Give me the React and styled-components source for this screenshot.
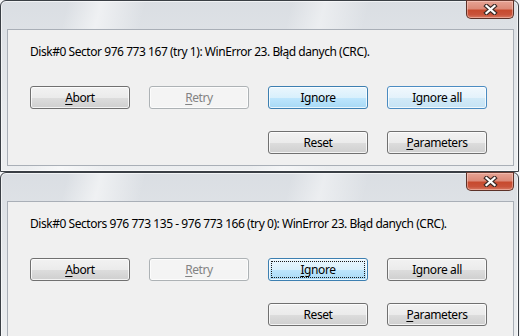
import React from 'react';
import styled, { createGlobalStyle, css } from 'styled-components';

const GlobalStyle = createGlobalStyle`
    html, body {
        margin: 0;
        padding: 0;
        background: #f3f4f6;
        overflow: hidden;
    }
    body {
        font-family: "Noto Sans", "Open Sans", sans-serif;
        font-size: 12px;
        color: #000;
    }
`;

const Page = styled.div`
    display: flex;
    flex-direction: column;
    width: 520px;
    height: 336px;
    overflow: hidden;
`;

const Window = styled.div`
    flex: none;
    box-sizing: border-box;
    width: 519px;
    height: 172px;
    padding: 0 4px 5px 6px;
    border: 1px solid #3a3f45;
    border-radius: 6px 6px 0 0;
    display: flex;
    flex-direction: column;
    background:
        linear-gradient(104deg,
            rgba(255, 255, 255, 0) 12%,
            rgba(255, 255, 255, 0.55) 18%,
            rgba(255, 255, 255, 0) 26%,
            rgba(255, 255, 255, 0) 52%,
            rgba(255, 255, 255, 0.45) 58%,
            rgba(255, 255, 255, 0) 66%),
        linear-gradient(180deg, #dadee3 0%, #e6e9ec 60%, #eceef0 100%);
    box-shadow: inset 0 0 0 1px rgba(255, 255, 255, 0.6);
`;

const TitleBar = styled.div`
    flex: none;
    height: 28px;
    display: flex;
    justify-content: flex-end;
    align-items: flex-start;
`;

const CloseButton = styled.div`
    box-sizing: border-box;
    width: 48px;
    height: 19px;
    margin-top: -1px;
    display: flex;
    align-items: center;
    justify-content: center;
    border: 1px solid #5c3128;
    border-top-color: #6a3a30;
    border-radius: 0 0 5px 5px;
    background: linear-gradient(180deg,
        #e6a394 0%, #dc8a78 45%, #c74a2e 55%, #c9533a 80%, #d77a62 100%);
    box-shadow: inset 0 0 0 1px rgba(255, 220, 210, 0.45);
`;

const Client = styled.div`
    flex: 1;
    box-sizing: border-box;
    border: 1px solid #a9afb7;
    background: #f0f0f0;
    padding: 14px 0 11px 22px;
    display: flex;
    flex-direction: column;
`;

const Message = styled.div`
    height: 16px;
    line-height: 16px;
    white-space: nowrap;
    letter-spacing: -0.45px;
`;

const ButtonGrid = styled.div`
    margin-top: 26px;
    display: grid;
    grid-template-columns: repeat(4, 100px);
    grid-auto-rows: 23px;
    column-gap: 19px;
    row-gap: 22px;
`;

const variants = {
    normal: css`
        border-color: #707070;
        background: linear-gradient(180deg, #f2f2f2 0%, #ebebeb 50%, #dddddd 51%, #cfcfcf 100%);
    `,
    disabled: css`
        border-color: #adb2b5;
        background: #f4f4f4;
        color: #838383;
    `,
    hot: css`
        border-color: #3c7fb1;
        background: linear-gradient(180deg, #eaf6fd 0%, #d9f0fc 50%, #bee6fd 51%, #a7d9f5 100%);
    `,
    default: css`
        border-color: #4b8cc2;
        background: linear-gradient(180deg, #f1f8fd 0%, #e4f2fb 50%, #d2eaf8 51%, #c6e3f4 100%);
    `,
};

const Button = styled.div`
    position: relative;
    box-sizing: border-box;
    grid-column: ${(p) => p.$col || 'auto'};
    display: flex;
    align-items: center;
    justify-content: center;
    border: 1px solid;
    border-radius: 3px;
    box-shadow: inset 0 0 0 1px rgba(255, 255, 255, 0.75);
    letter-spacing: -0.4px;
    line-height: 16px;
    ${(p) => variants[p.$variant || 'normal']}

    ${(p) => p.$focused && css`
        &::after {
            content: '';
            position: absolute;
            inset: 2px;
            border: 1px dotted #1a1a1a;
        }
    `}

    u {
        text-decoration: underline;
        text-underline-offset: 2px;
    }
`;

const CloseIcon = () => (
    <svg width="15" height="11" viewBox="0 0 15 11">
        <path d="M3.5 2 L11.5 9 M11.5 2 L3.5 9" stroke="#3b2a26" strokeWidth="4.4" strokeLinecap="square" fill="none" />
        <path d="M3.5 2 L11.5 9 M11.5 2 L3.5 9" stroke="#ffffff" strokeWidth="2.3" strokeLinecap="square" fill="none" />
    </svg>
);

const ErrorDialog = ({ message, buttons }) => (
    <Window>
        <TitleBar>
            <CloseButton>
                <CloseIcon />
            </CloseButton>
        </TitleBar>
        <Client>
            <Message>{message}</Message>
            <ButtonGrid>
                {buttons.map((b) => (
                    <Button key={b.key} $variant={b.variant} $focused={b.focused} $col={b.col}>
                        {b.label}
                    </Button>
                ))}
            </ButtonGrid>
        </Client>
    </Window>
);

const firstButtons = [
    { key: 'abort', label: <><u>A</u>bort</> },
    { key: 'retry', label: <><u>R</u>etry</>, variant: 'disabled' },
    { key: 'ignore', label: 'Ignore', variant: 'hot' },
    { key: 'ignoreall', label: 'Ignore all', variant: 'default' },
    { key: 'reset', label: 'Reset', col: 3 },
    { key: 'params', label: <><u>P</u>arameters</> },
];

const secondButtons = [
    { key: 'abort', label: <><u>A</u>bort</> },
    { key: 'retry', label: <><u>R</u>etry</>, variant: 'disabled' },
    { key: 'ignore', label: <><u>I</u>gnore</>, variant: 'hot', focused: true },
    { key: 'ignoreall', label: 'Ignore all' },
    { key: 'reset', label: 'Reset', col: 3 },
    { key: 'params', label: <><u>P</u>arameters</> },
];

const App = () => (
    <Page>
        <GlobalStyle />
        <ErrorDialog
            message="Disk#0 Sector 976 773 167 (try 1): WinError 23. Błąd danych (CRC)."
            buttons={firstButtons}
        />
        <ErrorDialog
            message="Disk#0 Sectors 976 773 135 - 976 773 166 (try 0): WinError 23. Błąd danych (CRC)."
            buttons={secondButtons}
        />
    </Page>
);

export default App;
